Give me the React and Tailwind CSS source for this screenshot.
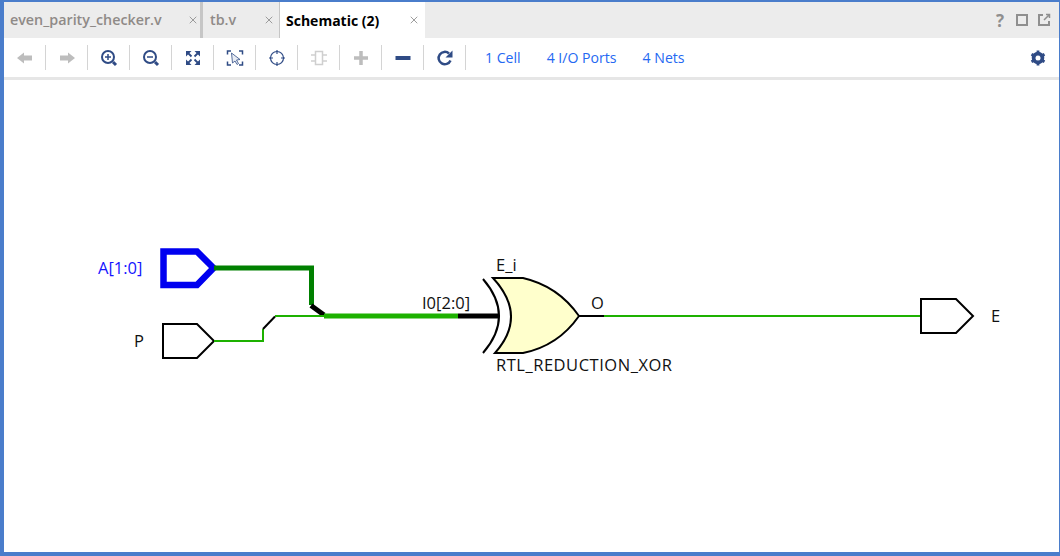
import { X } from "lucide-react"

const navy = "#2f4b85"
const grey = "#bdbdbd"

function Tab({ label, active, width, padding }) {
    return (
        <div className={`flex h-full items-center justify-between ${width} ${padding} ${active ? "bg-white text-black" : "text-[#8f8a87]"}`}>
            <span className={active ? "text-[14px] font-bold" : "text-[14.3px] font-semibold"}>{label}</span>
            <X size={12} color="#8c8c8c" strokeWidth={1.7} />
        </div>
    )
}

function ToolButton({ children }) {
    return (
        <div className="flex h-[25px] w-[42px] items-center justify-center border-r border-[#d4d4d4]">
            <svg width="20" height="20" viewBox="0 0 20 20" fill="none">{children}</svg>
        </div>
    )
}

function Schematic() {
    return (
        <svg className="block h-full w-full" viewBox="0 0 1055 472" fill="none">
            <g transform="translate(-4 -80)">
                <path d="M163.500 251.500H197L213.500 268L197 285H163.500Z" stroke="#0000f0" strokeWidth="6.500" />
                <path d="M214 268H311.500V305" stroke="#008000" strokeWidth="5" />
                <path d="M311 305.500L324 315" stroke="#000" strokeWidth="5" />
                <path d="M324 316H458" stroke="#1db100" strokeWidth="5" />
                <path d="M458 316H498" stroke="#000" strokeWidth="5" />

                <path d="M163 324H197L214 341L197 358H163Z" stroke="#000" strokeWidth="2" />
                <path d="M214 341H263V329" stroke="#1db100" strokeWidth="2" />
                <path d="M263 329L275 316.500" stroke="#000" strokeWidth="2" />
                <path d="M275 316H324" stroke="#1db100" strokeWidth="2" />

                <path d="M483 279Q515 316 483 353" stroke="#000" strokeWidth="2" />
                <path d="M493 278H523Q558 286 579 316Q558 346 523 353H495Q528 316 493 278Z" fill="#ffffcc" stroke="#000" strokeWidth="2" />
                <path d="M579 316H604" stroke="#000" strokeWidth="2" />
                <path d="M604 316H921" stroke="#1db100" strokeWidth="2" />
                <path d="M921 299H956L973 316L956 333H921Z" stroke="#000" strokeWidth="2" />

                <g fontFamily="'Open Sans', sans-serif" fontSize="16.500" fill="#111">
                    <text x="98" y="274" fill="#1414ff">A[1:0]</text>
                    <text x="134" y="347">P</text>
                    <text x="422" y="309">I0[2:0]</text>
                    <text x="496" y="271">E_i</text>
                    <text x="591" y="309">O</text>
                    <text x="496" y="371" textLength="176">RTL_REDUCTION_XOR</text>
                    <text x="991" y="322">E</text>
                </g>
            </g>
        </svg>
    )
}

export default function App() {
    return (
        <section className="flex h-screen w-full flex-col overflow-hidden border-t-2 border-r-[1px] border-b-4 border-l-4 border-[#4a7dcb] bg-white font-['Open_Sans',sans-serif]">
            <div className="flex h-[36px] shrink-0 items-center bg-[#ececec]">
                <Tab label="even_parity_checker.v" width="w-[196px]" padding="pl-[6px] pr-[1px]" />
                <div className="h-full w-[3px] bg-[#c6c6c6]" />
                <Tab label="tb.v" width="w-[76px]" padding="pl-[7px] pr-[4px]" />
                <div className="h-full w-[1px] bg-[#c6c6c6]" />
                <Tab label="Schematic (2)" active width="w-[145px]" padding="pl-[6px] pr-[5px]" />
                <div className="ml-auto flex items-center gap-[8px] pr-[8px]">
                    <span className="w-[14px] text-center text-[17px] leading-none font-bold text-[#8f8f8f]">?</span>
                    <svg width="14" height="14" viewBox="0 0 14 14" fill="none">
                        <rect x="2" y="2" width="10" height="10" stroke="#8f8f8f" strokeWidth="2" />
                    </svg>
                    <svg width="14" height="14" viewBox="0 0 14 14" fill="none">
                        <path d="M6 2H2V12H12V8" stroke="#8f8f8f" strokeWidth="2" />
                        <path d="M7 7L12 2M9 1.500H12.500V5" stroke="#8f8f8f" strokeWidth="1.500" />
                    </svg>
                </div>
            </div>

            <div className="flex h-[39px] shrink-0 items-center bg-white">
                <ToolButton>
                    <path d="M2 10L9 4.500V7.500H17V12.500H9V15.500Z" fill={grey} />
                </ToolButton>
                <ToolButton>
                    <path d="M18 10L11 4.500V7.500H3V12.500H11V15.500Z" fill={grey} />
                </ToolButton>
                <ToolButton>
                    <circle cx="9" cy="9" r="6" stroke={navy} strokeWidth="2" />
                    <path d="M6 9H12M9 6V12" stroke={navy} strokeWidth="1.500" />
                    <path d="M14 14L17 17" stroke={navy} strokeWidth="3" />
                </ToolButton>
                <ToolButton>
                    <circle cx="9" cy="9" r="6" stroke={navy} strokeWidth="2" />
                    <path d="M6 9H12" stroke={navy} strokeWidth="1.500" />
                    <path d="M14 14L17 17" stroke={navy} strokeWidth="3" />
                </ToolButton>
                <ToolButton>
                    <path d="M3 3H8.500L3 8.500Z" fill={navy} />
                    <path d="M17 3H11.500L17 8.500Z" fill={navy} />
                    <path d="M3 17H8.500L3 11.500Z" fill={navy} />
                    <path d="M17 17H11.500L17 11.500Z" fill={navy} />
                    <path d="M5 5L8.500 8.500M15 5L11.500 8.500M5 15L8.500 11.500M15 15L11.500 11.500" stroke={navy} strokeWidth="1.800" />
                </ToolButton>
                <ToolButton>
                    <path d="M6 3H2.500V6.500M14 3H17.500V6.500M2.500 13.500V17H6M17.500 13.500V17H14" stroke={navy} strokeWidth="1.500" />
                    <path d="M6.500 5L15 11.500L11.500 12L13.500 15.500L12 16.500L10 13L7.500 15Z" fill="#e8ecf4" stroke={navy} strokeWidth="0.800" />
                </ToolButton>
                <ToolButton>
                    <circle cx="10" cy="10" r="6.500" stroke={navy} strokeWidth="1.200" />
                    <path d="M10 2V6M10 14V18M2 10H6M14 10H18" stroke={navy} strokeWidth="1.200" />
                </ToolButton>
                <ToolButton>
                    <rect x="6.500" y="3.500" width="7" height="13" stroke="#cfcfcf" strokeWidth="1.500" />
                    <path d="M2 7H6M2 13H6M14 7H18M14 13H18" stroke="#cfcfcf" strokeWidth="1.500" />
                </ToolButton>
                <ToolButton>
                    <path d="M10 3V17M3 10H17" stroke={grey} strokeWidth="3.500" />
                </ToolButton>
                <ToolButton>
                    <path d="M2.500 10H17.500" stroke={navy} strokeWidth="4" />
                </ToolButton>
                <ToolButton>
                    <path d="M15.500 12.500A6.200 6.200 0 1 1 14 5.500" stroke={navy} strokeWidth="2.500" />
                    <path d="M17.500 2.500V9.500H10.500Z" fill={navy} />
                </ToolButton>
                <div className="flex gap-[26px] pl-[19px] text-[14.1px] text-[#2468f2]">
                    <span>1 Cell</span>
                    <span>4 I/O Ports</span>
                    <span>4 Nets</span>
                </div>
                <div className="ml-auto pr-[13px]">
                    <svg className="block" width="16" height="16" viewBox="0 0 16 16">
                        <circle cx="8" cy="8" r="4.500" fill="none" stroke={navy} strokeWidth="3.500" />
                        <path d="M8 0.500V15.500M1.500 4.250L14.500 11.750M1.500 11.750L14.500 4.250" stroke={navy} strokeWidth="2.800" />
                        <circle cx="8" cy="8" r="2.500" fill="#fff" />
                    </svg>
                </div>
            </div>

            <div className="h-[3px] shrink-0 bg-[#e6e6e6]" />

            <div className="min-h-0 flex-1">
                <Schematic />
            </div>
        </section>
    )
}
